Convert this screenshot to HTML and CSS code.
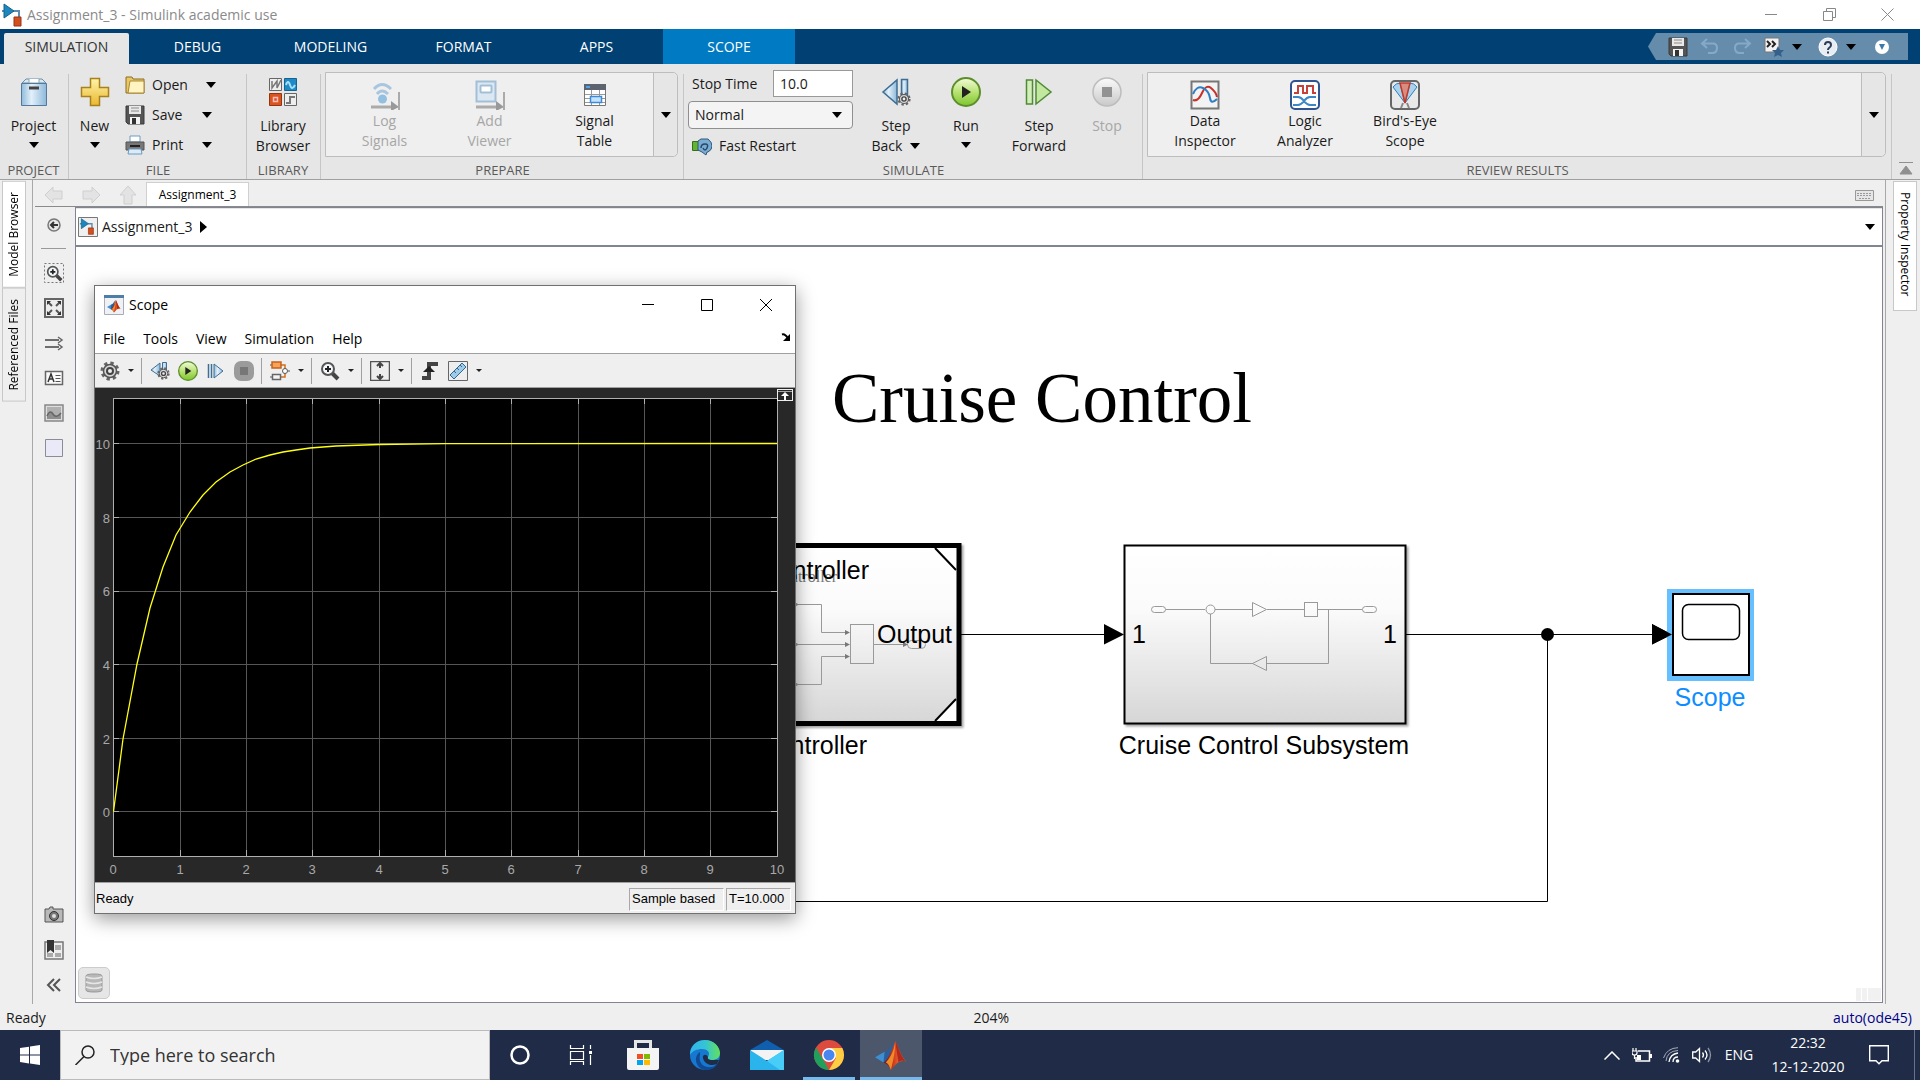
FILE: index.html
```html
<!DOCTYPE html>
<html lang="en">
<head>
<meta charset="utf-8">
<title>Assignment_3 - Simulink academic use</title>
<link rel="stylesheet" href="styles.css">
</head>
<body>
<svg class="defs" width="0" height="0" aria-hidden="true">
  <defs>
    <linearGradient id="gBlue" x1="0" y1="0" x2="1" y2="0"><stop offset="0" stop-color="#8fbbdc"/><stop offset=".4" stop-color="#e3f0fa"/><stop offset="1" stop-color="#8db8da"/></linearGradient>
    <linearGradient id="gYellow" x1="0" y1="0" x2="0" y2="1"><stop offset="0" stop-color="#fff3a8"/><stop offset="1" stop-color="#e9b92f"/></linearGradient>
    <linearGradient id="gGreen" x1="0" y1="0" x2="0" y2="1"><stop offset="0" stop-color="#f3fbdc"/><stop offset=".5" stop-color="#b9e373"/><stop offset="1" stop-color="#7cc42e"/></linearGradient>
    <linearGradient id="gGrey" x1="0" y1="0" x2="0" y2="1"><stop offset="0" stop-color="#fafafa"/><stop offset="1" stop-color="#c9c9c9"/></linearGradient>
    <linearGradient id="gBlock" x1="0" y1="0" x2="0" y2="1"><stop offset="0" stop-color="#fff"/><stop offset=".35" stop-color="#fbfbfb"/><stop offset="1" stop-color="#d6d6d6"/></linearGradient>
    <linearGradient id="gRed" x1="0" y1="0" x2="1" y2="0"><stop offset="0" stop-color="#5e1210"/><stop offset=".5" stop-color="#d8431f"/><stop offset="1" stop-color="#f7a14a"/></linearGradient>
    <linearGradient id="gEdge" x1="0" y1="0" x2="1" y2="0"><stop offset="0" stop-color="#2fb4f0"/><stop offset=".5" stop-color="#35c3d6"/><stop offset="1" stop-color="#62e05a"/></linearGradient>
    <symbol id="caret" viewBox="0 0 10 6"><path d="M0 0h10L5 6z" fill="#000"/></symbol>
    <symbol id="caretSmall" viewBox="0 0 6 3"><path d="M0 0h6L3 3z" fill="#222"/></symbol>
    <symbol id="floppy" viewBox="0 0 20 20"><path d="M1 1h18v18H3l-2-2z" fill="#555" stroke="#3a3a3a"/><path d="M4 1h12v8H4z" fill="#e9e9e9"/><path d="M6 3h8M6 6h8" stroke="#8a8a8a" stroke-width="1"/><path d="M5 12h10v7H5z" fill="#f4f4f4"/><path d="M7 13h4v6H7z" fill="#333"/></symbol>
    <symbol id="matlab" viewBox="0 0 30 30"><path d="M0 17 9 12l5 4-6 6z" fill="#3d8fd1"/><path d="M9 12c4-1 6-6 9-10L14 19l-6 3z" fill="#2a5f9e"/><path d="M8 22c4-2 7-10 11-20 3 5 5 14 10 19-5-2-9 2-14 8-2-3-3-6-7-7z" fill="url(#gRed)"/><path d="M19 2c3 5 5 14 10 19-3-1-5-1-7 1-1-6-2-13-3-20z" fill="#b3281c"/><path d="M15 29c1-6 4-14 4-27-1 10-6 17-9 20 3 1 4 5 5 7z" fill="#f08a2b"/></symbol>
    <symbol id="simulink" viewBox="0 0 20 24"><path d="M0 8h4M11 8h6v8" fill="none" stroke="#5b8db5" stroke-width="2"/><path d="M2 1l10 7-10 7z" fill="#1b87bd" stroke="#16638c"/><path d="M12 14h7v9h-7z" fill="#d2501f" stroke="#9b3413"/></symbol>
    <symbol id="run" viewBox="0 0 30 30"><circle cx="15" cy="15" r="14" fill="url(#gGreen)" stroke="#5c8f2a" stroke-width="2"/><path d="M11 9l9 6-9 6z" fill="#222"/></symbol>
    <symbol id="gear" viewBox="0 0 20 20"><circle cx="10" cy="10" r="8" fill="none" stroke="#666" stroke-width="3" stroke-dasharray="3.3 3"/><circle cx="10" cy="10" r="6.500" fill="#d6d6d6" stroke="#555" stroke-width="1.500"/><circle cx="10" cy="10" r="3" fill="#eee" stroke="#444" stroke-width="2"/></symbol>
    <symbol id="magnifier" viewBox="0 0 20 20"><path d="M12 12l6 6" stroke="#444" stroke-width="4"/><circle cx="8" cy="8" r="6" fill="#f4f8fa" stroke="#555" stroke-width="2"/><path d="M5 8h6M8 5v6" stroke="#222" stroke-width="2"/></symbol>
  </defs>
</svg>

<header class="titlebar">
  <svg class="i24" viewBox="0 0 24 24"><use href="#simulink" x="0" y="0" width="24" height="24"/></svg>
  <span class="titlebar-text">Assignment_3 - Simulink academic use</span>
  <div class="win-buttons">
    <button class="win-btn" aria-label="Minimize"><svg width="12" height="12"><path d="M0 5.500h12" stroke="#888"/></svg></button>
    <button class="win-btn" aria-label="Restore"><svg width="13" height="13"><path d="M.5 3.500h9v9h-9zM3.500 3V.5h9v9H10" fill="none" stroke="#888"/></svg></button>
    <button class="win-btn" aria-label="Close"><svg width="13" height="13"><path d="M.5.5l12 12M12.500.5l-12 12" stroke="#888"/></svg></button>
  </div>
</header>

<nav class="tabs">
  <button class="tab tab-active">SIMULATION</button>
  <button class="tab">DEBUG</button>
  <button class="tab">MODELING</button>
  <button class="tab">FORMAT</button>
  <button class="tab">APPS</button>
  <button class="tab tab-scope">SCOPE</button>
  <div class="quick">
    <button class="q-btn" aria-label="Save"><svg class="i20"><use href="#floppy"/></svg></button>
    <button class="q-btn" aria-label="Undo"><svg class="i20" viewBox="0 0 20 20"><path d="M7 2L2 6.500 7 11M3 6.500h10q4 0 4 4.500t-4 5H8" fill="none" stroke="#85a9c9" stroke-width="2"/></svg></button>
    <button class="q-btn" aria-label="Redo"><svg class="i20" viewBox="0 0 20 20"><path d="M13 2l5 4.500-5 4.500M17 6.500H7q-4 0-4 4.500t4 5h5" fill="none" stroke="#85a9c9" stroke-width="2"/></svg></button>
    <button class="q-btn q-wide" aria-label="Shortcuts"><svg class="i20" viewBox="0 0 20 20"><path d="M1 1h14v14H1z" fill="#f3f3f3" stroke="#777"/><path d="M3 4l3 3-3 3M8 4l3 3-3 3" fill="none" stroke="#222" stroke-width="2"/><path d="M14 9l2 4h4l-3 3 1 4-4-2-4 2 1-4-3-3h4z" fill="#35608c"/></svg><svg class="caret"><use href="#caret"/></svg></button>
    <button class="q-btn q-wide" aria-label="Help"><svg class="i20" viewBox="0 0 20 20"><circle cx="10" cy="10" r="9" fill="#e8edf3" stroke="#fff"/><path d="M7 8q0-3 3-3t3 3q0 1.500-1.500 2.500T10 13M10 14.500v2" fill="none" stroke="#2c3e55" stroke-width="2"/></svg><svg class="caret"><use href="#caret"/></svg></button>
    <button class="q-btn" aria-label="Customize"><svg class="i20" viewBox="0 0 20 20"><circle cx="10" cy="10" r="7" fill="#fff"/><path d="M7 7h6l-3 6z" fill="#3c78a8"/></svg></button>
  </div>
</nav>

<section class="strip">
  <div class="sec sec-project">
    <div class="sec-body">
      <button class="tool tool-fill"><svg class="i30" viewBox="0 0 30 30"><path d="M3 6l4-4h16l4 4z" fill="#d9e8f3" stroke="#6d8ea8"/><path d="M10 2v4h10V2" fill="#fff" stroke="#8aa"/><path d="M2.500 6.500h25v22h-25z" fill="url(#gBlue)" stroke="#54799a"/><path d="M10 11h10" stroke="#444" stroke-width="3"/></svg>Project<svg class="caret caret-line"><use href="#caret"/></svg></button>
    </div>
    <div class="sec-label">PROJECT</div>
  </div>
  <div class="sec sec-file">
    <div class="sec-body">
      <button class="tool tool-new"><svg class="i30" viewBox="0 0 30 30"><path d="M10.500 1.500h9v9h9v9h-9v9h-9v-9h-9v-9h9z" fill="url(#gYellow)" stroke="#a9801c" stroke-width="1.500"/></svg>New<svg class="caret caret-line"><use href="#caret"/></svg></button>
      <div class="rows">
        <button class="row-btn"><svg class="i20" viewBox="0 0 20 20"><path d="M1 2h6l1 2h11v14H1z" fill="#e8c766" stroke="#8d6e22"/><path d="M5 6h14v12H3z" fill="#fff4c2" stroke="#a98833"/></svg><span>Open</span><svg class="caret"><use href="#caret"/></svg></button>
        <button class="row-btn"><svg class="i20"><use href="#floppy"/></svg><span>Save</span><svg class="caret"><use href="#caret"/></svg></button>
        <button class="row-btn"><svg class="i20" viewBox="0 0 20 20"><path d="M5 1h10v6H5z" fill="#fff" stroke="#6b9cc4"/><path d="M1 7h18v8H1z" fill="#777" stroke="#555"/><path d="M5 11h10" stroke="#222" stroke-width="2"/><path d="M4 14h12l1 5H3z" fill="#dcebf7" stroke="#6b9cc4"/></svg><span>Print</span><svg class="caret"><use href="#caret"/></svg></button>
      </div>
    </div>
    <div class="sec-label">FILE</div>
  </div>
  <div class="sec sec-library">
    <div class="sec-body">
      <button class="tool tool-fill"><svg class="i30" viewBox="0 0 30 30"><path d="M1.500 1.500h12v12h-12z" fill="#eee" stroke="#666"/><path d="M4 4v7l5-7v7l4-8" fill="none" stroke="#777" stroke-width="1.500"/><path d="M16.500 1.500h12v12h-12z" fill="#1e8bc6" stroke="#15648f"/><path d="M18 8q2-6 4 0t5 0" fill="none" stroke="#a9e0ff" stroke-width="2"/><path d="M1.500 16.500h12v12h-12z" fill="#d9541e" stroke="#93360f"/><path d="M5.500 20.500h4v4h-4z" fill="none" stroke="#fbb" stroke-width="1.500"/><path d="M16.500 16.500h12v12h-12z" fill="#eee" stroke="#666"/><path d="M18 26h4v-6h5" fill="none" stroke="#777" stroke-width="2"/></svg>Library<br>Browser</button>
    </div>
    <div class="sec-label">LIBRARY</div>
  </div>
  <div class="sec sec-prepare">
    <div class="sec-body">
      <div class="gallery">
        <button class="tool tool-g" disabled><svg class="i30" viewBox="0 0 30 30"><path d="M4 9q8-9 17 0M7 14q5-6 11 0" fill="none" stroke="#a9c6de" stroke-width="3"/><circle cx="12.500" cy="19" r="4.500" fill="#93bfe0"/><path d="M1 27h22" stroke="#aaa" stroke-width="3"/><path d="M21 21l8 6-8 4z" fill="#999"/><path d="M29 12v18" stroke="#aaa" stroke-width="2"/></svg>Log<br>Signals</button>
        <button class="tool tool-g" disabled><svg class="i30" viewBox="0 0 30 30"><rect x="1.500" y="1.500" width="19" height="20" fill="#dbe8f3" stroke="#a3bfd6" stroke-width="2"/><rect x="5.500" y="5.500" width="11" height="7" rx="1" fill="#fff" stroke="#a3bfd6" stroke-width="2"/><path d="M1 27h22" stroke="#aaa" stroke-width="3"/><path d="M21 21l8 6-8 4z" fill="#999"/><path d="M29 12v18" stroke="#aaa" stroke-width="2"/></svg>Add<br>Viewer</button>
        <button class="tool tool-g"><svg class="i30" viewBox="0 0 30 30"><path d="M4.500 4.500h21v21h-21z" fill="#fff" stroke="#777"/><path d="M4 4h22v6H4z" fill="#5d6470"/><path d="M6 6h4v2H6z" fill="#4fa2ee"/><path d="M5 14.500h20M5 18.500h20M5 22.500h20M11.500 10v15M19.500 10v15" stroke="#999"/><path d="M10.500 16.500h11v6h-11z" fill="#c6e2fb" stroke="#3b8ad9" stroke-width="1.500"/></svg>Signal<br>Table</button>
        <button class="gallery-more" aria-label="More"><svg class="caret"><use href="#caret"/></svg></button>
      </div>
    </div>
    <div class="sec-label">PREPARE</div>
  </div>
  <div class="sec sec-simulate">
    <div class="sec-body">
      <div class="form">
        <div class="field"><label for="stop-time">Stop Time</label><input id="stop-time" type="text" value="10.0"></div>
        <div class="select"><select aria-label="Simulation mode"><option>Normal</option></select><svg class="caret"><use href="#caret"/></svg></div>
        <button class="fast"><svg class="i20" viewBox="0 0 20 20"><path d="M.5 5.500h6v9h-6z" fill="#62b531" stroke="#3c6d1d"/><path d="M6 5l3-2h7q4 3 4 7t-4 6h-1l-1 3-4-3-4-2z" fill="#7aabd0" stroke="#2e587a"/><path d="M9 12q0-4 4-4t2 4-4 0" fill="none" stroke="#24486a" stroke-width="1.500"/></svg>Fast Restart</button>
      </div>
      <button class="tool w70"><svg class="i30" viewBox="0 0 30 30"><path d="M16 3v24L2 15z" fill="url(#gBlue)" stroke="#3f6e94" stroke-width="1.500"/><path d="M20.500 2.500h6v20h-6z" fill="url(#gBlue)" stroke="#3f6e94" stroke-width="1.500"/><use href="#gear" x="16" y="15" width="14" height="14"/></svg>Step<span class="with-caret">Back<svg class="caret"><use href="#caret"/></svg></span></button>
      <button class="tool w70"><svg class="i30"><use href="#run"/></svg>Run<svg class="caret caret-line"><use href="#caret"/></svg></button>
      <button class="tool w76"><svg class="i30" viewBox="0 0 30 30"><path d="M2.500 3h6v24h-6z" fill="#d3eeba" stroke="#4f8a35" stroke-width="1.500"/><path d="M12 3v24l15-12z" fill="#c2e8a0" stroke="#4f8a35" stroke-width="1.500"/></svg>Step<br>Forward</button>
      <button class="tool w60" disabled><svg class="i30" viewBox="0 0 30 30"><circle cx="15" cy="15" r="14" fill="url(#gGrey)" stroke="#bdbdbd" stroke-width="1.500"/><path d="M10 10h10v10H10z" fill="#929292"/></svg>Stop</button>
    </div>
    <div class="sec-label">SIMULATE</div>
  </div>
  <div class="sec sec-review">
    <div class="sec-body">
      <div class="gallery">
        <button class="tool tool-r"><svg class="i30" viewBox="0 0 30 30"><path d="M1.500 1.500h27v27h-27z" fill="#f3f3f3" stroke="#777" stroke-width="2"/><path d="M3 20q5 2 9-7t9-5 6 9" fill="none" stroke="#c8302a" stroke-width="2"/><path d="M3 14q4-9 10-6t7 10 7 1" fill="none" stroke="#2f7fc4" stroke-width="2"/></svg>Data<br>Inspector</button>
        <button class="tool tool-r"><svg class="i30" viewBox="0 0 30 30"><rect x="1" y="1" width="28" height="28" rx="4" fill="#fff" stroke="#2e5590" stroke-width="2"/><path d="M4 13h4V6h5v7h4V6h6v7h3" fill="none" stroke="#c8403a" stroke-width="2"/><path d="M3 17h5q3 0 6 4t6 4h6M3 25h5q3 0 6-4t6-4h6" fill="none" stroke="#3b87c8" stroke-width="2"/></svg>Logic<br>Analyzer</button>
        <button class="tool tool-r"><svg class="i30" viewBox="0 0 30 30"><rect x="1" y="1" width="28" height="28" rx="4" fill="#e9e9e9" stroke="#666" stroke-width="2"/><path d="M3 7q3-4 7-4l5 20zM27 7q-3-4-7-4l-5 20z" fill="#a9d2ee" stroke="#2d7fb8"/><path d="M10 3h10l-5 20z" fill="#d98c80" stroke="#c0392b" stroke-width="1.500"/><path d="M13 23l-2 5M17 23l2 5" stroke="#888" stroke-width="2"/></svg>Bird's-Eye<br>Scope</button>
        <button class="gallery-more" aria-label="More"><svg class="caret"><use href="#caret"/></svg></button>
      </div>
    </div>
    <div class="sec-label">REVIEW RESULTS</div>
  </div>
  <div class="strip-end"><button class="plain" aria-label="Minimize toolstrip"><svg width="14" height="14"><path d="M0 1.500h14M1 13h12L7 5z" fill="#909090" stroke="#909090" stroke-width="1"/></svg></button></div>
</section>

<main class="work">
  <aside class="side side-left">
    <button class="side-tab side-on">Model Browser</button>
    <button class="side-tab">Referenced Files</button>
  </aside>
  <div class="center">
    <div class="doc-tabs">
      <button class="nav-arrow" aria-label="Back"><svg class="i20" viewBox="0 0 20 20"><path d="M1 10l8-8v4h9v8H9v4z" fill="#e3e3e3" stroke="#cfcfcf"/></svg></button>
      <button class="nav-arrow" aria-label="Forward"><svg class="i20" viewBox="0 0 20 20"><path d="M19 10l-8-8v4H2v8h9v4z" fill="#e3e3e3" stroke="#cfcfcf"/></svg></button>
      <button class="nav-arrow" aria-label="Up"><svg class="i20" viewBox="0 0 20 20"><path d="M10 1l8 9h-4v9H6v-9H2z" fill="#e3e3e3" stroke="#cfcfcf"/></svg></button>
      <button class="doc-tab">Assignment_3</button>
      <button class="keyboard" aria-label="Keyboard"><svg width="19" height="11"><path d="M.5.5h18v10H.5z" fill="#e6e6e6" stroke="#999"/><path d="M2 3.500h15M2 5.500h15M4 8.500h11" stroke="#999" stroke-dasharray="2 1"/></svg></button>
    </div>
    <div class="editor">
      <div class="palette">
        <button class="pal" aria-label="Hide"><svg class="i20" viewBox="0 0 20 20"><circle cx="10" cy="10" r="6" fill="#e8e8e8" stroke="#777" stroke-width="1.500"/><path d="M14 10H7M10 7l-3 3 3 3" fill="none" stroke="#333" stroke-width="2"/></svg></button>
        <div class="pal-sep"></div>
        <button class="pal" aria-label="Zoom"><svg class="i20" viewBox="0 0 20 20"><path d="M.5.5h19v19H.5z" fill="none" stroke="#777" stroke-dasharray="2 2"/><use href="#magnifier" x="2" y="2" width="17" height="17"/></svg></button>
        <button class="pal" aria-label="Fit to view"><svg class="i20" viewBox="0 0 20 20"><path d="M1 1h18v18H1z" fill="#eee" stroke="#666" stroke-width="2"/><path d="M8 8L4 4M12 8l4-4M8 12l-4 4M12 12l4 4" stroke="#555" stroke-width="2"/><path d="M3 3h4L3 7zM17 3v4l-4-4zM3 17v-4l4 4zM17 17h-4l4-4z" fill="#333"/></svg></button>
        <button class="pal" aria-label="Sample time"><svg class="i20" viewBox="0 0 20 20"><path d="M1 7h14M1 14h14" stroke="#444" stroke-width="1.500"/><path d="M14 4l4 3-4 3M14 11l4 3-4 3" fill="none" stroke="#666" stroke-width="1.500"/></svg></button>
        <button class="pal" aria-label="Annotation"><svg class="i20" viewBox="0 0 20 20"><path d="M1.500 3.500h17v13h-17z" fill="#fafafa" stroke="#666" stroke-width="1.500"/><path d="M4 14l3-8 3 8M5 11h4" fill="none" stroke="#333" stroke-width="1.500"/><path d="M11.500 7.500h5M11.500 10.500h5M11.500 13.500h5" stroke="#555"/></svg></button>
        <button class="pal" aria-label="Image"><svg class="i20" viewBox="0 0 20 20"><path d="M1 2h18v16H1z" fill="#ddd" stroke="#888" stroke-width="1.500"/><path d="M3 4h14v12H3z" fill="#b0b0b0"/><path d="M3 13q3-7 6-2t8-1v6H3z" fill="#8e8e8e"/><path d="M3 13q3-7 6-2t8-1" fill="none" stroke="#666" stroke-width="1.500"/></svg></button>
        <button class="pal" aria-label="Area"><svg class="i20" viewBox="0 0 20 20"><path d="M1.500 1.500h17v17h-17z" fill="#e9e9f7" stroke="#8c8c96"/></svg></button>
        <button class="pal pal-bottom" aria-label="Screenshot"><svg class="i20" viewBox="0 0 20 20"><path d="M1 4h4l1-2h3v2h10v13H1z" fill="#b9b9b9" stroke="#555"/><circle cx="10" cy="11" r="4.500" fill="#777" stroke="#333"/><circle cx="10" cy="11" r="2" fill="#ddd"/></svg></button>
        <button class="pal" aria-label="Explorer"><svg class="i20" viewBox="0 0 20 20"><path d="M1 2h18v17H1z" fill="#eee" stroke="#777" stroke-width="1.500"/><path d="M11 5h6v5h-6zM11 13h6v4h-6zM3 13h6v4H3z" fill="#aaa"/><path d="M3 0h7v13l-3.500-3L3 13z" fill="#333"/></svg></button>
        <button class="pal" aria-label="Collapse"><svg class="i20" viewBox="0 0 20 20"><path d="M10 4l-6 6 6 6M16 4l-6 6 6 6" fill="none" stroke="#555" stroke-width="2"/></svg></button>
      </div>
      <div class="sheet">
        <div class="crumbs">
          <svg class="i20" viewBox="0 0 20 20"><path d="M.5.5h19v19H.5z" fill="#f0f0f0" stroke="#777"/><use href="#simulink" x="1" y="1" width="16" height="17"/></svg>
          <a class="crumb" href="#">Assignment_3</a>
          <svg width="7" height="12"><path d="M0 0l7 6-7 6z"/></svg>
          <button class="plain crumb-more" aria-label="History"><svg class="caret"><use href="#caret"/></svg></button>
        </div>
        <div class="canvas">
          <svg class="diagram" width="100%" height="100%">
            <g transform="translate(-76 -247)">
              <text x="1042" y="422" class="d-title">Cruise Control</text>
              <g class="d-block">
                <rect x="612" y="545.500" width="347" height="178" fill="url(#gBlock)" stroke="#000" stroke-width="5"/>
              </g>
              <path d="M934 548h22v22zM934 721h22v-22z" fill="#fff"/>
              <path d="M935 548l21 22M935 721l21-22" stroke="#000" stroke-width="2"/>
              <g class="d-mini">
                <path d="M790 604.500h31.500v28H846M790 644.500h56M790 684.500h31.500v-28H846M873 644.500h31"/>
                <rect x="850.500" y="624.500" width="23" height="39"/>
                <rect x="907.500" y="640.500" width="18" height="8" rx="4"/>
                <path d="M794 602l4 2.500-4 2.500M794 642l4 2.500-4 2.500M794 682l4 2.500-4 2.500"/>
                <path class="d-head" d="M845 630l5 2.500-5 2.500zM845 642l5 2.500-5 2.500zM845 654l5 2.500-5 2.500zM903 642l5 2.500-5 2.500z"/>
              </g>
              <text x="837" y="582" class="d-small">Controller</text>
              <text x="869" y="579" class="d-text d-end">Controller</text>
              <text x="952" y="643" class="d-text d-end">Output</text>
              <text x="867" y="754" class="d-text d-end">Controller</text>
              <path class="d-wire" d="M961 634.500h146M1406 634.500h250M1547.500 634v267.500H780"/>
              <path d="M1104 624l20 10.500-20 10zM1652 624l20 10.500-20 10z"/>
              <circle cx="1547.500" cy="634.500" r="6.500"/>
              <g class="d-block"><rect x="1124.500" y="545.500" width="281" height="178" fill="url(#gBlock)" stroke="#000" stroke-width="2"/></g>
              <g class="d-mini">
                <path d="M1166 609.500h39M1215 609.500h37M1267 609.500h37M1318 609.500h44M1210.500 614v49.500H1253M1267 663.500h61.500v-54"/>
                <rect x="1151.500" y="606.500" width="14" height="6" rx="3"/><rect x="1362.500" y="606.500" width="14" height="6" rx="3"/>
                <circle cx="1210.500" cy="609.500" r="4.500"/>
                <rect x="1304.500" y="602.500" width="13" height="14"/>
                <path d="M1252.500 602.500l14 7-14 7zM1266.500 656.500l-14 7 14 7z"/>
              </g>
              <text x="1132" y="643" class="d-text">1</text>
              <text x="1397" y="643" class="d-text d-end">1</text>
              <text x="1264" y="754" class="d-text d-mid">Cruise Control Subsystem</text>
              <rect x="1667" y="589" width="87" height="92" fill="#66bfff"/>
              <rect x="1673" y="594" width="76" height="81" fill="#fff" stroke="#000" stroke-width="2"/>
              <rect x="1682.500" y="604.500" width="57" height="35" rx="6" fill="#fff" stroke="#000" stroke-width="1.500"/>
              <path d="M1652 624l20 10.500-20 10z"/>
              <text x="1710" y="706" class="d-text d-mid d-blue">Scope</text>
            </g>
          </svg>
          <button class="data-btn" aria-label="Model data"><svg class="i20" viewBox="0 0 20 20"><path d="M2 3q0-2 8-2t8 2v14q0 2-8 2t-8-2z" fill="#b8b8b8" stroke="#999"/><path d="M2 4q8 3 16 0M2 9q8 3 16 0M2 14q8 3 16 0" fill="none" stroke="#e6e6e6" stroke-width="1.500"/></svg></button>
          <div class="corner-marks"><i></i><i></i><i class="wide"></i></div>

          <section class="scope">
            <div class="scope-title">
              <svg class="i20" viewBox="0 0 20 20"><path d="M.5.5h19v19H.5z" fill="#eef2f5" stroke="#aab"/><path d="M0 0h20v3H0z" fill="#4c7ea8"/><use href="#matlab" x="3" y="4" width="14" height="14"/></svg>
              <span>Scope</span>
              <div class="scope-buttons">
                <button class="scope-btn" aria-label="Minimize"><svg width="12" height="12"><path d="M0 5.500h12" stroke="#000"/></svg></button>
                <button class="scope-btn" aria-label="Maximize"><svg width="12" height="12"><path d="M.5.5h11v11H.5z" fill="none" stroke="#000"/></svg></button>
                <button class="scope-btn" aria-label="Close"><svg width="12" height="12"><path d="M0 0l12 12M12 0L0 12" stroke="#000"/></svg></button>
              </div>
            </div>
            <div class="menu">
              <button>File</button><button>Tools</button><button>View</button><button>Simulation</button><button>Help</button>
              <svg class="dock" width="9" height="8"><path d="M1 1.500q3-1 6 4" fill="none" stroke="#000" stroke-width="2"/><path d="M9 1v7H2z"/></svg>
            </div>
            <div class="bar">
              <button class="b" aria-label="Settings"><svg class="i20"><use href="#gear"/></svg></button><svg class="cs"><use href="#caretSmall"/></svg><hr>
              <button class="b" aria-label="Step back"><svg class="i20" viewBox="0 0 20 20"><path d="M10 2v13L1 9z" fill="url(#gBlue)" stroke="#3f6e94"/><path d="M12.500 1.500h4v8h-4z" fill="url(#gBlue)" stroke="#3f6e94"/><use href="#gear" x="7" y="6" width="13" height="13"/></svg></button>
              <button class="b" aria-label="Run"><svg class="i20"><use href="#run"/></svg></button>
              <button class="b" aria-label="Step forward"><svg class="i20" viewBox="0 0 20 20"><path d="M2.500 3v14M5.500 3v14" stroke="#3f6e94" stroke-width="1.500"/><path d="M8 3v14l9-7z" fill="url(#gBlue)" stroke="#3f6e94"/></svg></button>
              <button class="b" aria-label="Stop"><svg class="i20" viewBox="0 0 20 20"><rect x="0" y="0" width="20" height="20" rx="7" fill="#9b9b9b"/><path d="M6 6h8v8H6z" fill="#777"/></svg></button><hr>
              <button class="b" aria-label="Highlight block"><svg class="i20" viewBox="0 0 20 20"><path d="M11 4h4v5M11 16h4v-4" fill="none" stroke="#d27022" stroke-width="1.500"/><path d="M0 4h2M0 16h2M18 10h2" stroke="#555"/><path d="M2 1h9v6H2z" fill="#f7a35b" stroke="#c6621a" stroke-width="1.500"/><path d="M2.500 13.500h8v5h-8z" fill="#f4f4f4" stroke="#666" stroke-width="1.500"/><circle cx="15" cy="10" r="2.500" fill="#fff" stroke="#555"/></svg></button><svg class="cs"><use href="#caretSmall"/></svg><hr>
              <button class="b" aria-label="Zoom"><svg class="i20"><use href="#magnifier"/></svg></button><svg class="cs"><use href="#caretSmall"/></svg><hr>
              <button class="b" aria-label="Scale"><svg class="i20" viewBox="0 0 20 20"><path d="M.5.5h19v19H.5z" fill="#eee" stroke="#555" stroke-width="1.500"/><path d="M10 2v5M10 13v5M7 5l3-3 3 3M7 15l3 3 3-3" fill="none" stroke="#444" stroke-width="2"/></svg></button><svg class="cs"><use href="#caretSmall"/></svg><hr>
              <button class="b" aria-label="Triggers"><svg class="i20" viewBox="0 0 20 20"><path d="M2 17h7V3h9" fill="none" stroke="#444" stroke-width="4"/><path d="M3 11l6-6 6 6z" fill="#222"/></svg></button>
              <button class="b" aria-label="Measurements"><svg class="i20" viewBox="0 0 20 20"><path d="M.5.5h19v19H.5z" fill="#eee" stroke="#666"/><path d="M2 14L14 2l4 4L6 18z" fill="#9fcbe8" stroke="#2e6a94"/><path d="M6 10l2 2M9 7l2 2M12 4l2 2" stroke="#2e6a94"/></svg></button><svg class="cs"><use href="#caretSmall"/></svg>
            </div>
            <div class="plot">
              <svg width="700" height="494" viewBox="95 388 700 494">
                <rect x="113" y="398" width="664" height="458"/>
                <path class="p-grid" d="M180.500 398v458M246.500 398v458M312.500 398v458M379.500 398v458M445.500 398v458M511.500 398v458M578.500 398v458M644.500 398v458M710.500 398v458M113 443.500h664M113 517.500h664M113 591.500h664M113 664.500h664M113 738.500h664M113 811.500h664"/>
                <path class="p-tick" d="M180.500 398v6M246.500 398v6M312.500 398v6M379.500 398v6M445.500 398v6M511.500 398v6M578.500 398v6M644.500 398v6M710.500 398v6M180.500 850v6M246.500 850v6M312.500 850v6M379.500 850v6M445.500 850v6M511.500 850v6M578.500 850v6M644.500 850v6M710.500 850v6M113 443.500h6M113 517.500h6M113 591.500h6M113 664.500h6M113 738.500h6M113 811.500h6M771 443.500h6M771 517.500h6M771 591.500h6M771 664.500h6M771 738.500h6M771 811.500h6"/>
                <rect x="113.500" y="398.500" width="664" height="458" fill="none" stroke="#afafaf"/>
                <polyline class="p-line" points="113.500,811.500 123,739 137,664 150,608 163,567 176,535 190,512 203,495 216,482 230,472 243,465 256,459 270,455 283,452 296,450 310,448 336,446 379,444.500 445,443.700 777,443.500"/>
                <g class="p-label p-end"><text x="110" y="449">10</text><text x="110" y="523">8</text><text x="110" y="596">6</text><text x="110" y="670">4</text><text x="110" y="744">2</text><text x="110" y="817">0</text></g>
                <g class="p-label p-mid"><text x="113" y="874">0</text><text x="180" y="874">1</text><text x="246" y="874">2</text><text x="312" y="874">3</text><text x="379" y="874">4</text><text x="445" y="874">5</text><text x="511" y="874">6</text><text x="578" y="874">7</text><text x="644" y="874">8</text><text x="710" y="874">9</text><text x="777" y="874">10</text></g>
                <rect x="777.500" y="389.500" width="15" height="11" fill="#282828" stroke="#eee"/><path d="M778 391.500h14" stroke="#aaa"/><path d="M785 392l4 4h-3v4h-2v-4h-3z" fill="#fff"/>
              </svg>
            </div>
            <div class="scope-status"><span>Ready</span><span class="cell cell-a">Sample based</span><span class="cell cell-b">T=10.000</span></div>
          </section>
        </div>
      </div>
    </div>
  </div>
  <aside class="side side-right">
    <button class="side-tab side-on">Property Inspector</button>
  </aside>
</main>

<footer class="status"><span>Ready</span><span>204%</span><a href="#">auto(ode45)</a></footer>

<div class="taskbar">
  <button class="tb start" aria-label="Start"><svg width="20" height="20"><path d="M0 3l9-1.300V9.500H0zM10 1.500L20 0v9.500H10zM0 10.500h9v7.900L0 17zM10 10.500h10V20l-10-1.500z" fill="#fff"/></svg></button>
  <div class="search"><svg width="20" height="20"><circle cx="13" cy="7" r="6" fill="none" stroke="#222" stroke-width="1.500"/><path d="M9 11.500L.5 20" stroke="#222" stroke-width="1.500"/></svg><input type="text" aria-label="Search" placeholder="Type here to search"></div>
  <button class="tb tb-cortana" aria-label="Cortana"><svg width="24" height="24"><circle cx="12" cy="12" r="8.500" fill="none" stroke="#fff" stroke-width="2.500"/></svg></button>
  <button class="tb" aria-label="Task view"><svg width="24" height="20"><path d="M1.500 0v3.500h13V0M1.500 6.500h13v8h-13zM1.500 20v-3.500h13V20M21.500 0v4M21.500 10v10" fill="none" stroke="#fff" stroke-width="1.200"/><path d="M20 6h3v3h-3z" fill="#fff"/></svg></button>
  <button class="tb" aria-label="Store"><svg width="34" height="32"><path d="M9.500 9V2.500h15V9" fill="none" stroke="#e6e6e6" stroke-width="3"/><path d="M1 9h32v20q0 2-2 2H3q-2 0-2-2z" fill="#f4f4f4"/><path d="M11 15h6v5h-6z" fill="#f25022"/><path d="M18 15h6v5h-6z" fill="#7fba00"/><path d="M11 21h6v5h-6z" fill="#00a4ef"/><path d="M18 21h6v5h-6z" fill="#ffb900"/></svg></button>
  <button class="tb" aria-label="Edge"><svg width="34" height="32" viewBox="0 0 34 32"><circle cx="17" cy="16" r="15" fill="#1678cf"/><path d="M2 14C3 5 10 1 17 1c9 0 15 7 15 13 0 5-4 7-8 7-3 0-5-1-4-3 3-5-1-8-6-8-5 0-10 2-12 6z" fill="url(#gEdge)"/><path d="M12 16c-2 8 4 13 11 12 3 0 5-2 7-4-3 7-12 9-18 5-5-4-6-12 0-16z" fill="#104a94"/><path d="M20 18c-1 2 1 3 4 3h7l-2 4c-7 3-13-1-14-6-1-3 3-5 5-1z" fill="#202c47"/></svg></button>
  <button class="tb" aria-label="Mail"><svg width="34" height="32"><path d="M0 11L17 1l17 10v5H0z" fill="#0f5fae"/><path d="M1 11h32v10H1z" fill="#f3f3f3"/><path d="M0 11l17 11 17-11v20H0z" fill="#2bb3ec"/><path d="M17 22l17-11v20H30z" fill="#47cdf7"/></svg></button>
  <button class="tb tb-open" aria-label="Chrome"><svg width="32" height="32"><circle cx="16" cy="16" r="15" fill="#dd4b3e"/><path d="M3 8.500L11 22l5 9A15 15 0 013 8.500z" fill="#1fa15d"/><path d="M16 9h13.300A15 15 0 0116 31l7-12z" fill="#fecd41"/><circle cx="16" cy="16" r="7" fill="#fff"/><circle cx="16" cy="16" r="5.500" fill="#4a86f0"/></svg></button>
  <button class="tb tb-open tb-current" aria-label="MATLAB"><svg width="34" height="32"><use href="#matlab"/></svg></button>
  <div class="tray">
    <button class="tr" aria-label="Hidden icons"><svg width="16" height="9"><path d="M.5 8.500L8 1l7.500 7.500" fill="none" stroke="#fff" stroke-width="1.500"/></svg></button>
    <button class="tr" aria-label="Battery"><svg width="20" height="14"><path d="M6 3h11.500v10H4V9" fill="none" stroke="#fff" stroke-width="1.500"/><path d="M18 6h2v4h-2zM5 7h4v5H5z" fill="#fff"/><path d="M1 0v3M4 0v3M0 3h5v2q0 2-2.500 2T0 5zM2.500 7v4" fill="none" stroke="#fff" stroke-width="1.200"/></svg></button>
    <button class="tr" aria-label="Network"><svg width="18" height="16"><circle cx="14.500" cy="14" r="1.800" fill="#fff"/><path d="M10 15q0-5 5-5M6 15q1-8 9-9" fill="none" stroke="#fff" stroke-width="1.300"/><path d="M3 14Q4 4 15 3.500M.5 11Q4 1 15 .7" fill="none" stroke="#a5abba"/></svg></button>
    <button class="tr" aria-label="Volume"><svg width="20" height="16"><path d="M.7 5h3L7.500 1.500v13L3.700 11h-3z" fill="none" stroke="#fff" stroke-width="1.300"/><path d="M10.500 5.500q2 2.500 0 5M13 3.500q4 4.500 0 9" fill="none" stroke="#fff" stroke-width="1.300"/><path d="M16 1q5 7 0 14" fill="none" stroke="#8b93a5" stroke-width="1.300"/></svg></button>
    <button class="tr lang">ENG</button>
    <button class="tr clock">22:32<br>12-12-2020</button>
    <button class="tr bell" aria-label="Notifications"><svg width="20" height="20"><path d="M.7.7h18.600v15H13l-3 3-3-3H.7z" fill="none" stroke="#fff" stroke-width="1.400"/></svg></button>
  </div>
</div>
</body>
</html>
```
FILE: styles.css
```css
* { box-sizing: border-box; }

body {
  margin: 0;
  min-height: 100vh;
  display: flex;
  flex-direction: column;
  background: #efefef;
  color: #1a1a1a;
  font: 14px/20px "Open Sans", "Noto Sans", sans-serif;
}

button {
  margin: 0;
  padding: 0;
  border: 0;
  background: none;
  color: inherit;
  font: inherit;
  white-space: nowrap;
}

a { color: inherit; text-decoration: none; }
svg { display: block; flex: none; }
.defs { position: absolute; }

.i20 { width: 20px; height: 20px; }
.i24 { width: 24px; height: 24px; }
.i30 { width: 30px; height: 30px; }
.caret { width: 10px; height: 6px; }

/* Title bar */
.titlebar { display: flex; align-items: center; height: 29px; background: #fff; color: #8a8a8a; }
.titlebar-text { margin-left: 3px; }
.win-buttons { display: flex; margin-left: auto; padding-right: 4px; }
.win-btn { display: grid; place-items: center; width: 58px; height: 28px; }

/* Ribbon tabs */
.tabs { display: flex; height: 35px; padding-left: 4px; background: #004073; color: #fff; }
.tab { width: 133px; }
.tab-active { width: 125px; margin: 4px 2px 0 0; padding-bottom: 4px; border-radius: 2px 2px 0 0; background: #e6e6e6; color: #333; }
.tab-scope { width: 132px; background: #007ac2; }
.quick {
  display: flex;
  align-items: center;
  height: 27px;
  margin: 4px 12px 0 auto;
  padding: 0 16px 0 20px;
  gap: 12px;
  background: #668cab;
  clip-path: polygon(8px 0, 100% 0, 100% 100%, 8px 100%, 0 50%);
}
.q-btn { display: flex; align-items: center; gap: 8px; }
.q-wide { margin-right: 4px; }

/* Toolstrip */
.strip { display: flex; height: 116px; background: #e6e6e6; border-bottom: 1px solid #a0a0a0; }
.sec {
  display: flex;
  flex-direction: column;
  background: linear-gradient(#c6c6c6, #c6c6c6) right bottom / 1px 105px no-repeat;
}
.sec-body { display: flex; flex: 1; }
.sec-label { height: 17px; line-height: 17px; text-align: center; font-size: 13px; color: #5a5a5a; white-space: nowrap; }
.sec-project { width: 69px; padding-right: 2px; }
.sec-file { width: 178px; }
.sec-library { width: 74px; padding-right: 2px; }
.sec-prepare { width: 363px; }
.sec-simulate { width: 459px; }
.sec-review { flex: 1; }

.tool { align-self: flex-start; padding-top: 13px; text-align: center; }
.tool > .i30 { margin: 0 auto 9px; }
.tool-fill { width: 100%; }
.tool-new { width: 51px; }
.tool:disabled { color: #a6a6a6; }
.caret-line { margin: 6px auto 0; }
.with-caret { display: flex; align-items: center; justify-content: center; gap: 8px; }
.w60 { width: 60px; }
.w70 { width: 70px; }
.w76 { width: 76px; }

.rows { padding: 6px 0 0 5px; }
.row-btn { display: flex; align-items: center; height: 30px; }
.row-btn span { min-width: 32px; margin: 0 18px 0 7px; text-align: left; }

.gallery {
  display: flex;
  flex: 1;
  height: 85px;
  margin: 8px 6px 0 4px;
  border: 1px solid #bdbdbd;
  border-radius: 0 5px 5px 0;
  background: #efefef;
}
.tool-g, .tool-r { padding-top: 7px; }
.tool-g > .i30, .tool-r > .i30 { margin-bottom: 1px; }
.tool-g { width: 105px; }
.tool-g:first-child { margin-left: 6px; }
.tool-r { width: 100px; }
.tool-r:first-child { margin-left: 7px; }
.gallery-more {
  display: grid;
  place-items: center;
  width: 24px;
  margin-left: auto;
  border-left: 1px solid #bdbdbd;
  border-radius: 0 5px 5px 0;
  background: #e6e6e6;
}

.form { width: 177px; padding: 6px 8px 0 4px; }
.field { display: flex; align-items: center; justify-content: space-between; padding-left: 4px; }
.field input { width: 80px; height: 27px; padding: 0 6px; border: 1px solid #999; background: #fff; font: inherit; color: inherit; }
.select { position: relative; margin-top: 4px; }
.select select {
  appearance: none;
  width: 100%;
  height: 28px;
  padding: 0 6px;
  border: 1px solid #8f8f8f;
  border-radius: 4px;
  background: #f4f4f4;
  font: inherit;
  color: inherit;
}
.select .caret { position: absolute; right: 11px; top: 11px; }
.fast { display: flex; align-items: center; gap: 7px; height: 20px; margin: 7px 0 0 4px; }
.strip-end { display: flex; align-items: flex-end; justify-content: center; width: 28px; padding-bottom: 4px; }

/* Work area */
.work { display: flex; flex: 1; }
.side { display: flex; flex-direction: column; align-items: flex-start; margin-bottom: -1px; padding-top: 1px; }
.side-left { width: 33px; padding-left: 2px; border-right: 1px solid #a8a8a8; }
.side-right { width: 35px; padding-left: 7px; border-left: 1px solid #a8a8a8; }
.side-tab {
  width: 24px;
  padding: 10px 0;
  border: 1px solid #c8c8c8;
  writing-mode: vertical-rl;
  font-size: 12px;
  line-height: 22px;
  color: #000;
}
.side-left .side-tab { transform: rotate(180deg); }
.side-right .side-tab { padding-bottom: 14px; }
.side-on { background: #fff; }

.center { display: flex; flex: 1; flex-direction: column; padding: 0 2px; }
.doc-tabs { display: flex; align-items: center; height: 27px; border-bottom: 1px solid #8a8a8a; }
.nav-arrow { display: grid; place-items: center; width: 37px; height: 24px; margin-top: 4px; }
.doc-tab { width: 103px; height: 24px; align-self: flex-end; border: 1px solid #d0d0d0; border-bottom: 0; background: #fff; font-size: 12px; color: #000; }
.keyboard { margin: 4px 9px 0 auto; }

.editor { display: flex; flex: 1; }
.palette { display: flex; flex-direction: column; width: 40px; padding: 0 3px 1px 0; }
.pal { display: grid; place-items: center; height: 35px; }
.pal-sep { height: 13px; margin: 0 6px; background: linear-gradient(#999, #999) center / 100% 1px no-repeat; }
.pal-bottom { margin-top: auto; }

.sheet { display: flex; flex: 1; flex-direction: column; border: 1px solid #808591; }
.crumbs {
  display: flex;
  align-items: center;
  gap: 4px;
  height: 39px;
  padding: 0 7px 0 2px;
  background: #fff;
  border-top: 1px solid #e6e6e6;
  border-bottom: 2px solid #808591;
}
.crumb { margin-right: 4px; }
.plain { display: block; }
.crumb-more { margin-left: auto; }

.canvas { position: relative; flex: 1; min-height: 755px; overflow: hidden; background: #fff; }
.diagram { position: absolute; inset: 0; }
.d-title { font: 71px "Liberation Serif", serif; text-anchor: middle; }
.d-text { font: 25px "Liberation Sans", sans-serif; }
.d-small { font: 16px "Liberation Serif", serif; text-anchor: end; fill: #777; }
.d-end { text-anchor: end; }
.d-mid { text-anchor: middle; }
.d-blue { fill: #0d8dff; }
.d-wire { fill: none; stroke: #000; }
.d-mini { fill: none; stroke: #999; }
.d-head { fill: #777; stroke: none; }
.d-block { filter: drop-shadow(2px 2px 1px rgba(0, 0, 0, .35)); }

.data-btn {
  position: absolute;
  left: 2px;
  bottom: 3px;
  display: grid;
  place-items: center;
  width: 32px;
  height: 32px;
  border: 1px solid #ccc;
  border-radius: 5px;
  background: #e6e6e6;
}
.corner-marks { position: absolute; right: 1px; bottom: 1px; display: flex; gap: 1px; }
.corner-marks i { width: 5px; height: 13px; background: #f1f1f1; }
.corner-marks .wide { width: 13px; }

/* Scope window */
.scope {
  position: absolute;
  left: 18px;
  top: 38px;
  display: flex;
  flex-direction: column;
  width: 702px;
  height: 629px;
  border: 1px solid #707070;
  background: #fff;
  box-shadow: 0 5px 18px rgba(0, 0, 0, .4);
  color: #000;
}
.scope-title { display: flex; align-items: center; gap: 5px; height: 37px; padding-left: 9px; }
.scope-buttons { display: flex; align-self: stretch; margin-left: auto; }
.scope-btn { display: grid; place-items: center; width: 59px; }
.menu { display: flex; align-items: center; gap: 18px; height: 31px; padding: 2px 5px 0 8px; border-bottom: 1px solid #a0a0a0; }
.dock { margin: 0 0 4px auto; }
.bar { display: flex; align-items: center; height: 34px; padding-left: 5px; border-bottom: 1px solid #a0a0a0; background: #efefef; }
.b { width: 20px; margin-right: 8px; }
.b:has(+ hr) { margin-right: 0; }
.cs { width: 6px; height: 3px; }
.bar > hr { width: 1px; height: 26px; margin: 0 8px 0 7px; border: 0; background: #a0a0a0; }
.plot { flex: 1; background: #282828; }
.p-grid { stroke: #565656; }
.p-tick { stroke: #afafaf; }
.p-line { fill: none; stroke: #ffff14; stroke-width: 1.3; }
.p-label { font: 13px "Liberation Sans", sans-serif; fill: #a8a8a8; }
.p-end { text-anchor: end; }
.p-mid { text-anchor: middle; }
.scope-status {
  display: flex;
  align-items: center;
  gap: 2px;
  height: 31px;
  padding: 2px 4px 0 1px;
  border-top: 1px solid #a0a0a0;
  background: #efefef;
  font: 13px/20px "Liberation Sans", sans-serif;
}
.cell { height: 23px; padding-left: 2px; border: 1px solid; border-color: #a8a8a8 #fff #fff #a8a8a8; }
.cell-a { width: 95px; margin-left: auto; }
.cell-b { width: 65px; }

/* Status bar */
.status { display: grid; grid-template-columns: 15fr auto 14fr; align-items: center; height: 27px; padding: 3px 8px 0 6px; }
.status a { justify-self: end; color: #00008b; }

/* Taskbar */
.taskbar { display: flex; height: 50px; background: #202c47; color: #fff; }
.tb { display: grid; place-items: center; width: 62px; }
.start { width: 60px; }
.tb-cortana { width: 60px; }
.search { display: flex; align-items: center; gap: 15px; width: 430px; padding-left: 14px; border: 1px solid #bbb; background: #f2f2f2; }
.search input { flex: 1; border: 0; padding: 0; background: none; font: inherit; font-size: 18px; }
.search input::placeholder { color: #333; opacity: 1; }
.tb-open { background: linear-gradient(#76b9ed, #76b9ed) center bottom / 52px 3px no-repeat; }
.tb-current { background: linear-gradient(#76b9ed, #76b9ed) center bottom / 100% 3px no-repeat, #4d576c; }
.tray { display: flex; margin-left: auto; margin-right: 5px; padding-right: 11px; border-right: 1px solid #6a7285; }
.tr { display: grid; place-items: center; width: 30px; }
.lang { width: 44px; }
.clock { width: 94px; display: block; line-height: 24px; }
.bell { width: 48px; }
```
